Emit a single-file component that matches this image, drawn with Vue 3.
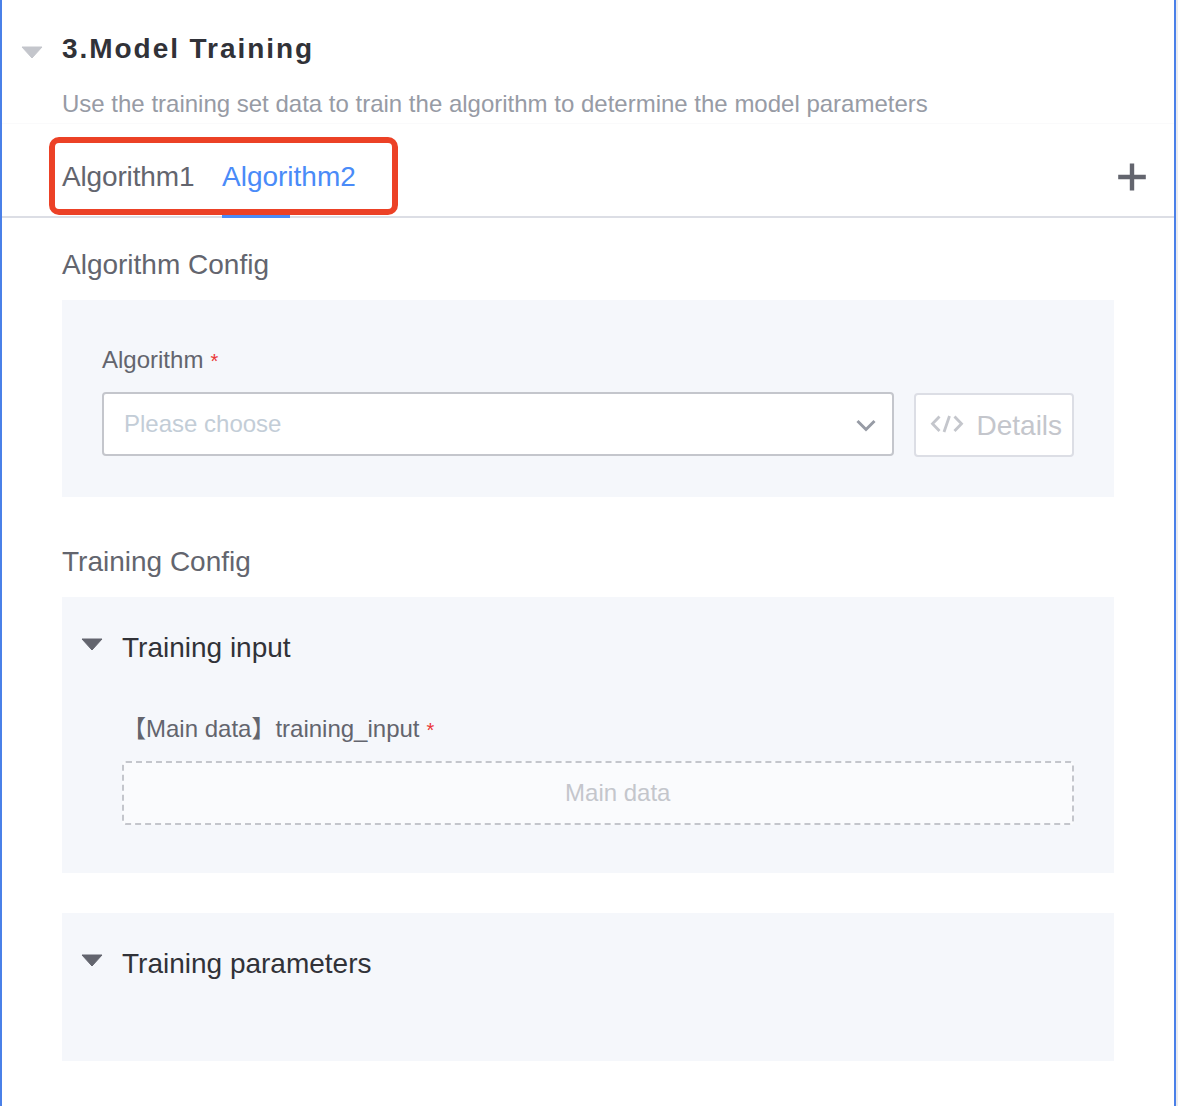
<script setup>
import { ref } from 'vue'

const tabs = ['Algorithm1', 'Algorithm2']
const active = ref(1)
</script>

<template>
  <main class="page">
    <header class="head">
      <svg class="head-caret" width="22" height="14" viewBox="0 0 22 14"><path d="M1 1h20L11 12z" fill="#c4c6cc" stroke="#c4c6cc" stroke-linejoin="round" /></svg>
      <div>
        <h1 class="title">3.Model Training</h1>
        <p class="desc">Use the training set data to train the algorithm to determine the model parameters</p>
      </div>
    </header>

    <nav class="tabs">
      <button
        v-for="(tab, i) in tabs"
        :key="tab"
        class="tab"
        :class="{ active: i === active }"
        @click="active = i"
      >{{ tab }}</button>
      <svg class="plus" width="28" height="28" viewBox="0 0 28 28"><path d="M14 .5v27M.2 14h27.6" stroke="#63656e" stroke-width="4.4" /></svg>
      <span class="highlight"></span>
    </nav>

    <section class="section">
      <h2 class="heading">Algorithm Config</h2>
      <div class="panel algorithm">
        <label class="label">Algorithm<i class="star">*</i></label>
        <div class="row">
          <div class="select">
            <span>Please choose</span>
            <svg class="chevron" width="20" height="14" viewBox="0 0 20 14"><path d="M1.5 2L10 10.5 18.5 2" fill="none" stroke="#979ba5" stroke-width="3" /></svg>
          </div>
          <button class="details">
            <svg width="34" height="18" viewBox="0 0 34 18"><path d="M9.500 1.500L2.500 8.800l7 7.200M19.500 1L14 17M24.500 1.500L31.500 8.800l-7 7.200" fill="none" stroke="#c4c6cc" stroke-width="2.800" /></svg>
            <span>Details</span>
          </button>
        </div>
      </div>
    </section>

    <section class="section training">
      <h2 class="heading">Training Config</h2>
      <div class="panel input">
        <h3 class="subhead">
          <svg width="22" height="14" viewBox="0 0 22 14"><path d="M1 1h20L11 12z" fill="#63656e" stroke="#63656e" stroke-linejoin="round" /></svg>
          <span>Training input</span>
        </h3>
        <div class="field">
          <label class="label">【Main data】training_input<i class="star">*</i></label>
          <div class="drop">Main data</div>
        </div>
      </div>
      <div class="panel params">
        <h3 class="subhead">
          <svg width="22" height="14" viewBox="0 0 22 14"><path d="M1 1h20L11 12z" fill="#63656e" stroke="#63656e" stroke-linejoin="round" /></svg>
          <span>Training parameters</span>
        </h3>
      </div>
    </section>
  </main>
</template>

<style>
body {
  background: #ebebed;
}
</style>

<style scoped>
.page {
  box-sizing: border-box;
  width: 1176px;
  height: 1106px;
  overflow: hidden;
  border: solid #4a80e8;
  border-width: 0 2px;
  background: #fff;
  color: #63656e;
  font: 24px "Liberation Sans", "Noto Sans CJK SC", sans-serif;
}
h1, h2, h3, p {
  margin: 0;
  font-weight: 400;
}
button {
  padding: 0;
  font: inherit;
  color: inherit;
  background: none;
  border: 0;
}
svg {
  display: block;
  flex: none;
}
.head {
  box-sizing: border-box;
  display: flex;
  gap: 19px;
  height: 124px;
  padding: 28px 0 0 19px;
  border-bottom: 1px solid #fafafb;
}
.head-caret {
  margin-top: 18px;
}
.title {
  height: 56px;
  color: #313238;
  font-size: 28px;
  font-weight: 700;
  line-height: 42px;
  letter-spacing: 1.95px;
}
.desc {
  color: #979ba5;
  line-height: 40px;
  white-space: nowrap;
}
.tabs {
  position: relative;
  box-sizing: border-box;
  display: flex;
  height: 94px;
  padding-left: 60px;
  border-bottom: 2px solid #dcdee5;
}
.tab {
  position: relative;
  width: 160px;
  height: 94px;
  padding-bottom: 2px;
  font-size: 28px;
  line-height: 106px;
  text-align: left;
}
.tab:first-child {
  letter-spacing: -0.15px;
}
.tab.active {
  color: #4a8bf8;
}
.tab.active::after {
  content: "";
  position: absolute;
  bottom: 0;
  left: 0;
  width: 68px;
  height: 4px;
  background: #4a8bf8;
}
.plus {
  margin: 39px 28px 0 auto;
}
.highlight {
  position: absolute;
  top: 13px;
  left: 47px;
  box-sizing: border-box;
  width: 349px;
  height: 78px;
  border: 6px solid #ec4126;
  border-radius: 10px;
}
.section {
  padding: 26px 60.5px 0 60px;
}
.training {
  padding-top: 44px;
}
.heading {
  height: 56px;
  font-size: 28px;
  line-height: 42px;
}
.panel {
  box-sizing: border-box;
  background: #f5f7fb;
}
.algorithm {
  height: 197px;
  padding: 40px 40px 0;
}
.label {
  display: block;
  height: 52px;
  line-height: 40px;
}
.star {
  margin-left: 7px;
  color: #ea3636;
  font-size: 20px;
  font-style: normal;
}
.row {
  display: flex;
  gap: 20px;
}
.select {
  box-sizing: border-box;
  flex: 1;
  display: flex;
  align-items: center;
  justify-content: space-between;
  height: 64px;
  padding: 0 16px 0 20px;
  border: 2px solid #c4c6cc;
  border-radius: 4px;
  background: #fff;
  color: #c3cdd7;
}
.chevron {
  margin-top: 3px;
}
.details {
  box-sizing: border-box;
  display: flex;
  align-items: center;
  gap: 13px;
  width: 160px;
  height: 64px;
  margin-top: 1px;
  padding-left: 14px;
  border: 2px solid #dcdee5;
  border-radius: 4px;
  background: #fff;
  color: #c4c6cc;
  font-size: 28px;
}
.details svg {
  margin-top: -2px;
}
.details span {
  padding-top: 2px;
}
.input {
  height: 276px;
  padding: 30px 40px 0 19px;
}
.subhead {
  display: flex;
  gap: 19px;
  height: 41px;
  color: #313238;
  font-size: 28px;
  line-height: 42px;
}
.subhead svg {
  margin-top: 11px;
}
.field {
  padding: 41px 0 0 41px;
}
.drop {
  box-sizing: border-box;
  height: 64px;
  padding-left: 40px;
  border: 2px dashed #c4c6cc;
  border-radius: 4px;
  background: #fafbfd;
  color: #c4c6cc;
  line-height: 60px;
  text-align: center;
}
.params {
  height: 148px;
  margin-top: 40px;
  padding: 30px 0 0 19px;
}
</style>
